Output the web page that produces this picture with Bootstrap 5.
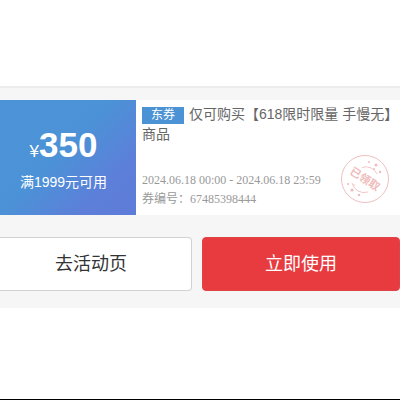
<!DOCTYPE html>
<html lang="zh-CN">
<head>
<meta charset="utf-8">
<meta name="viewport" content="width=device-width, initial-scale=1">
<title>优惠券</title>
<link href="https://cdn.jsdelivr.net/npm/bootstrap@5.3.0/dist/css/bootstrap.min.css" rel="stylesheet">
<style>
body{font-family:"Liberation Sans","Noto Sans CJK SC",sans-serif;background:#fff;color:#666;border-bottom:1px solid #000}
.top-space{height:86px}
.coupon-area{background:#f6f6f6;border-top:2px solid #ececec;padding:12px 0 17px}
.coupon{min-height:115px}
.amount-pane{flex:0 0 34%;background:linear-gradient(135deg,#4c94d7 0%,#4c92d7 45%,#5d7ed9 78%,#5d7cd9 100%);color:#fff;padding:2px 9px 0 0}
.amount{font-size:35px;line-height:40px}
.currency{font-size:17px}
.condition{font-size:14px;line-height:20px}
.info-pane{padding:4px 0 0 6px}
.coupon-title{font-size:14px;line-height:20px;color:#666}
.coupon-tag{background:#4c93d6;font-size:12px;line-height:17px;width:42px;margin-right:5px}
.meta{font-family:"Liberation Serif","Noto Sans CJK SC",serif;font-size:12px;line-height:19px;color:#999;padding-bottom:6px}
.stamp{width:50px;height:50px;margin:0 10px 11px 0}
.actions{margin-top:22px}
.action-btn{font-size:18px;line-height:27px;padding:13px 0 12px;border-width:1px;border-radius:4px}
.to-event{background:#fff;border-color:#d2d2d2;color:#333;border-left:0;border-radius:0 4px 4px 0;padding-right:9px}
.use-now{background:#e83b3f;border-color:#e04347;color:#fff}
.use-col{padding-left:2px}
.bottom-space{height:91px}
</style>
<script src="https://cdn.jsdelivr.net/npm/bootstrap@5.3.0/dist/js/bootstrap.bundle.min.js"></script>
</head>
<body>
<div class="top-space"></div>
<main class="coupon-area">
  <section class="coupon d-flex bg-white">
    <div class="amount-pane d-flex flex-column align-items-center justify-content-center">
      <div class="amount fw-bold"><span class="currency fw-normal">¥</span>350</div>
      <div class="condition">满1999元可用</div>
    </div>
    <div class="info-pane flex-grow-1 d-flex flex-column justify-content-between">
      <div class="coupon-title"><span class="coupon-tag d-inline-block text-center text-white">东券</span>仅可购买【618限时限量 手慢无】商品</div>
      <div class="d-flex justify-content-between align-items-end">
        <div class="meta text-nowrap">
          <div>2024.06.18 00:00 - 2024.06.18 23:59</div>
          <div>券编号：67485398444</div>
        </div>
        <svg class="stamp flex-shrink-0" viewBox="0 0 50 50" fill="none" stroke="#f0c0c0" role="img" aria-label="已领取">
          <circle cx="25" cy="25" r="23.5"/>
          <path d="M22 13.500A12 12 0 0 1 37 20M12 29A12.500 12.500 0 0 0 28 38" stroke-width=".9"/>
          <text x="25" y="29" transform="rotate(33 25 25)" text-anchor="middle" font-size="11" font-weight="700" font-family="Noto Sans CJK SC, sans-serif" fill="#efbcbc" stroke="none">已领取</text>
          <g fill="#efbcbc" stroke="none"><circle cx="29" cy="8" r="1"/><circle cx="36" cy="11" r="1.500"/><circle cx="34" cy="15" r="1"/><circle cx="40" cy="18" r="1.200"/><circle cx="8" cy="30" r="1"/><circle cx="12" cy="36" r="1.600"/><circle cx="14" cy="31" r=".8"/><circle cx="19" cy="41" r="1.200"/></g>
        </svg>
      </div>
    </div>
  </section>
  <div class="actions row gx-0">
    <div class="col-6 pe-2"><button type="button" class="btn action-btn to-event w-100">去活动页</button></div>
    <div class="col-6 use-col"><button type="button" class="btn action-btn use-now w-100">立即使用</button></div>
  </div>
</main>
<div class="bottom-space"></div>
</body>
</html>
